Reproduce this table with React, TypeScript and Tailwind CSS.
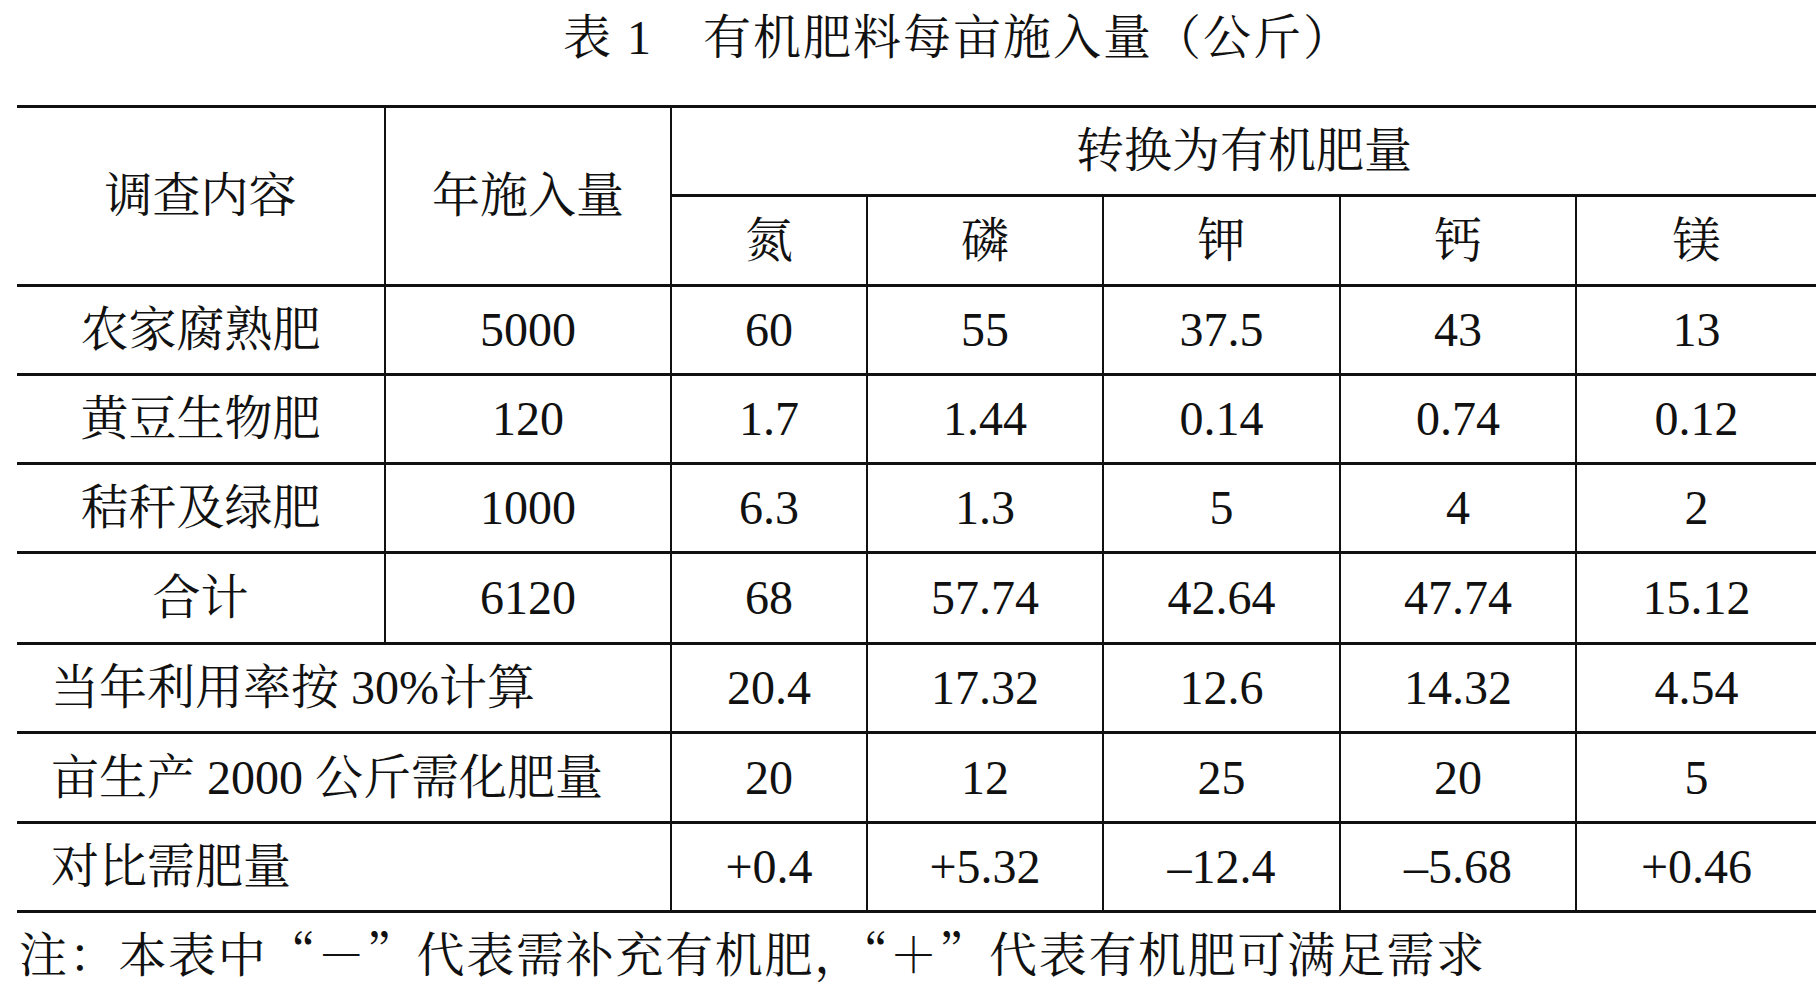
import React from 'react';

type Cell = {
  text: string;
  col: string;
  row: string;
  borderR?: boolean;
};

const FONT = 'font-["Liberation_Serif","Noto_Serif_CJK_SC","Noto_Sans_CJK_SC",serif]';

const cells: Cell[] = [
  // header
  { text: '调查内容', col: 'col-start-1', row: 'row-span-2', borderR: true },
  { text: '年施入量', col: 'col-start-2', row: 'row-span-2', borderR: true },
  { text: '转换为有机肥量', col: 'col-start-3 col-span-5', row: '' },
  { text: '氮', col: 'col-start-3', row: '', borderR: true },
  { text: '磷', col: 'col-start-4', row: '', borderR: true },
  { text: '钾', col: 'col-start-5', row: '', borderR: true },
  { text: '钙', col: 'col-start-6', row: '', borderR: true },
  { text: '镁', col: 'col-start-7', row: '' },
];

const dataRows: string[][] = [
  ['农家腐熟肥', '5000', '60', '55', '37.5', '43', '13'],
  ['黄豆生物肥', '120', '1.7', '1.44', '0.14', '0.74', '0.12'],
  ['秸秆及绿肥', '1000', '6.3', '1.3', '5', '4', '2'],
  ['合计', '6120', '68', '57.74', '42.64', '47.74', '15.12'],
];

const wideRows: string[][] = [
  ['当年利用率按 30%计算', '20.4', '17.32', '12.6', '14.32', '4.54'],
  ['亩生产 2000 公斤需化肥量', '20', '12', '25', '20', '5'],
  ['对比需肥量', '+0.4', '+5.32', '–12.4', '–5.68', '+0.46'],
];

const Box: React.FC<{
  children: React.ReactNode;
  className?: string;
  right?: boolean;
  left?: boolean;
}> = ({ children, className = '', right, left }) => (
  <div
    className={`flex items-center border-b-[3px] border-[#111] ${right ? 'border-r-2' : ''} ${
      left ? 'justify-start pl-[34px]' : 'justify-center'
    } ${className}`}
  >
    {children}
  </div>
);

const App: React.FC = () => {
  return (
    <div
      lang="zh-CN"
      className={`w-[1816px] h-[984px] overflow-hidden bg-white text-[#111] ${FONT} text-[48px] leading-none`}
    >
      <div className="h-[105px] flex items-start justify-center pt-[14px] pl-[100px]">
        <h1 className="font-normal tracking-[2px]">表 1　有机肥料每亩施入量（公斤）</h1>
      </div>

      <div className="ml-[17px] border-t-[3px] border-[#111] grid grid-cols-[369px_286px_196px_236px_237px_236px_239px] grid-rows-[89px_90px_89px_89px_89px_91px_89px_90px_89px]">
        {cells.map((c) => (
          <Box key={c.text} className={`${c.col} ${c.row}`} right={c.borderR}>
            {c.text}
          </Box>
        ))}

        {dataRows.map((r) =>
          r.map((v, i) => (
            <Box key={r[0] + i} right={i < 6}>
              {v}
            </Box>
          ))
        )}

        {wideRows.map((r) =>
          r.map((v, i) => (
            <Box key={r[0] + i} className={i === 0 ? 'col-span-2' : ''} right={i < 5} left={i === 0}>
              {v}
            </Box>
          ))
        )}
      </div>

      <p className="mt-[15px] ml-[19px] font-['Noto_Serif_CJK_SC','Noto_Sans_CJK_SC',serif] tracking-[1.7px] whitespace-nowrap">
        注：本表中“－”代表需补充有机肥，“＋”代表有机肥可满足需求
      </p>
    </div>
  );
};

export default App;
